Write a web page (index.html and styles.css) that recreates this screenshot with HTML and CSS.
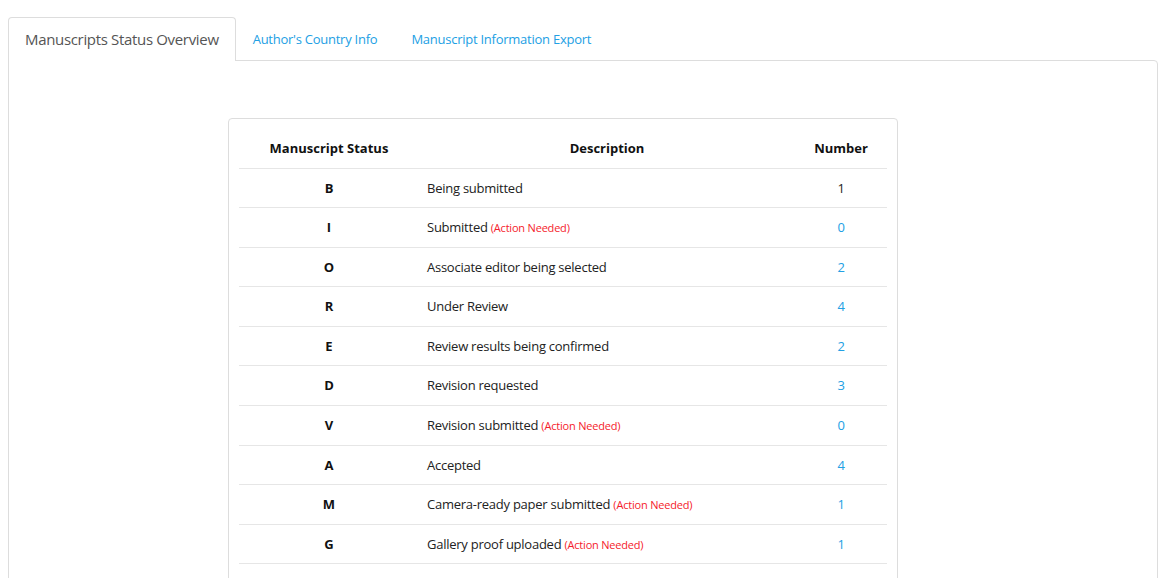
FILE: index.html
```html
<!DOCTYPE html>
<html lang="en">
<head>
<meta charset="utf-8">
<title>Manuscripts Status Overview</title>
<link rel="stylesheet" href="styles.css">
</head>
<body>
<div class="page">
  <ul class="tabs">
    <li class="tab active">Manuscripts Status Overview</li>
    <li class="tab"><a href="#">Author's Country Info</a></li>
    <li class="tab"><a href="#">Manuscript Information Export</a></li>
  </ul>
  <div class="panel">
    <div class="box">
      <table class="status-table">
        <colgroup>
          <col class="c-status">
          <col class="c-desc">
          <col class="c-num">
        </colgroup>
        <thead>
          <tr><th>Manuscript Status</th><th>Description</th><th>Number</th></tr>
        </thead>
        <tbody>
          <tr><td class="st">B</td><td class="desc">Being submitted</td><td class="num">1</td></tr>
          <tr><td class="st">I</td><td class="desc">Submitted <span class="need">(Action Needed)</span></td><td class="num"><a href="#">0</a></td></tr>
          <tr><td class="st">O</td><td class="desc">Associate editor being selected</td><td class="num"><a href="#">2</a></td></tr>
          <tr><td class="st">R</td><td class="desc">Under Review</td><td class="num"><a href="#">4</a></td></tr>
          <tr><td class="st">E</td><td class="desc">Review results being confirmed</td><td class="num"><a href="#">2</a></td></tr>
          <tr><td class="st">D</td><td class="desc">Revision requested</td><td class="num"><a href="#">3</a></td></tr>
          <tr><td class="st">V</td><td class="desc">Revision submitted <span class="need">(Action Needed)</span></td><td class="num"><a href="#">0</a></td></tr>
          <tr><td class="st">A</td><td class="desc">Accepted</td><td class="num"><a href="#">4</a></td></tr>
          <tr><td class="st">M</td><td class="desc">Camera-ready paper submitted <span class="need">(Action Needed)</span></td><td class="num"><a href="#">1</a></td></tr>
          <tr><td class="st">G</td><td class="desc">Gallery proof uploaded <span class="need">(Action Needed)</span></td><td class="num"><a href="#">1</a></td></tr>
        </tbody>
      </table>
    </div>
  </div>
</div>
</body>
</html>
```

FILE: styles.css
```css
html, body {
  margin: 0;
  padding: 0;
  background: #fff;
}

body {
  font-family: "Open Sans", "Noto Sans", sans-serif;
  font-size: 13px;
  line-height: 1.42857;
  color: #222;
  letter-spacing: -0.25px;
}

.page {
  padding: 17px 8px 0 8px;
}

.tabs {
  list-style: none;
  margin: 0;
  padding: 0;
  display: flex;
  position: relative;
  z-index: 1;
}

.tab {
  padding: 11px 16px 12px;
  border: 1px solid transparent;
  border-bottom: none;
  height: 20px;
  line-height: 20px;
  font-size: 13px;
  margin-bottom: -1px;
}

.tab a {
  color: #22a0e4;
  text-decoration: none;
}

.tab.active {
  font-size: 15px;
  letter-spacing: -0.33px;
  color: #555;
  background: #fff;
  border-color: #ddd;
  border-radius: 4px 4px 0 0;
}

.panel {
  border: 1px solid #ddd;
  border-radius: 0 4px 0 0;
  padding: 57px 0 40px 219px;
  min-height: 520px;
}

.box {
  width: 648px;
  border: 1px solid #ddd;
  border-radius: 4px;
  padding: 10px 10px 30px;
}

.status-table {
  width: 648px;
  border-collapse: collapse;
  table-layout: fixed;
}

.c-status { width: 180px; }
.c-desc { width: 376px; }
.c-num { width: 92px; }

.status-table th {
  font-weight: 700;
  color: #111;
  text-align: center;
  letter-spacing: 0;
  padding: 10px 8px;
  border-bottom: 1px solid #e6e6e6;
}

.status-table td {
  padding: 10px 8px;
  border-bottom: 1px solid #e6e6e6;
  color: #222;
}

.status-table td.st {
  text-align: center;
  font-weight: 700;
  color: #111;
  letter-spacing: 0;
}

.status-table td.num {
  text-align: center;
}

.status-table td.num a {
  color: #22a0e4;
  text-decoration: none;
}

.need {
  color: #f51c2c;
  font-size: 11px;
  letter-spacing: -0.2px;
}
```
